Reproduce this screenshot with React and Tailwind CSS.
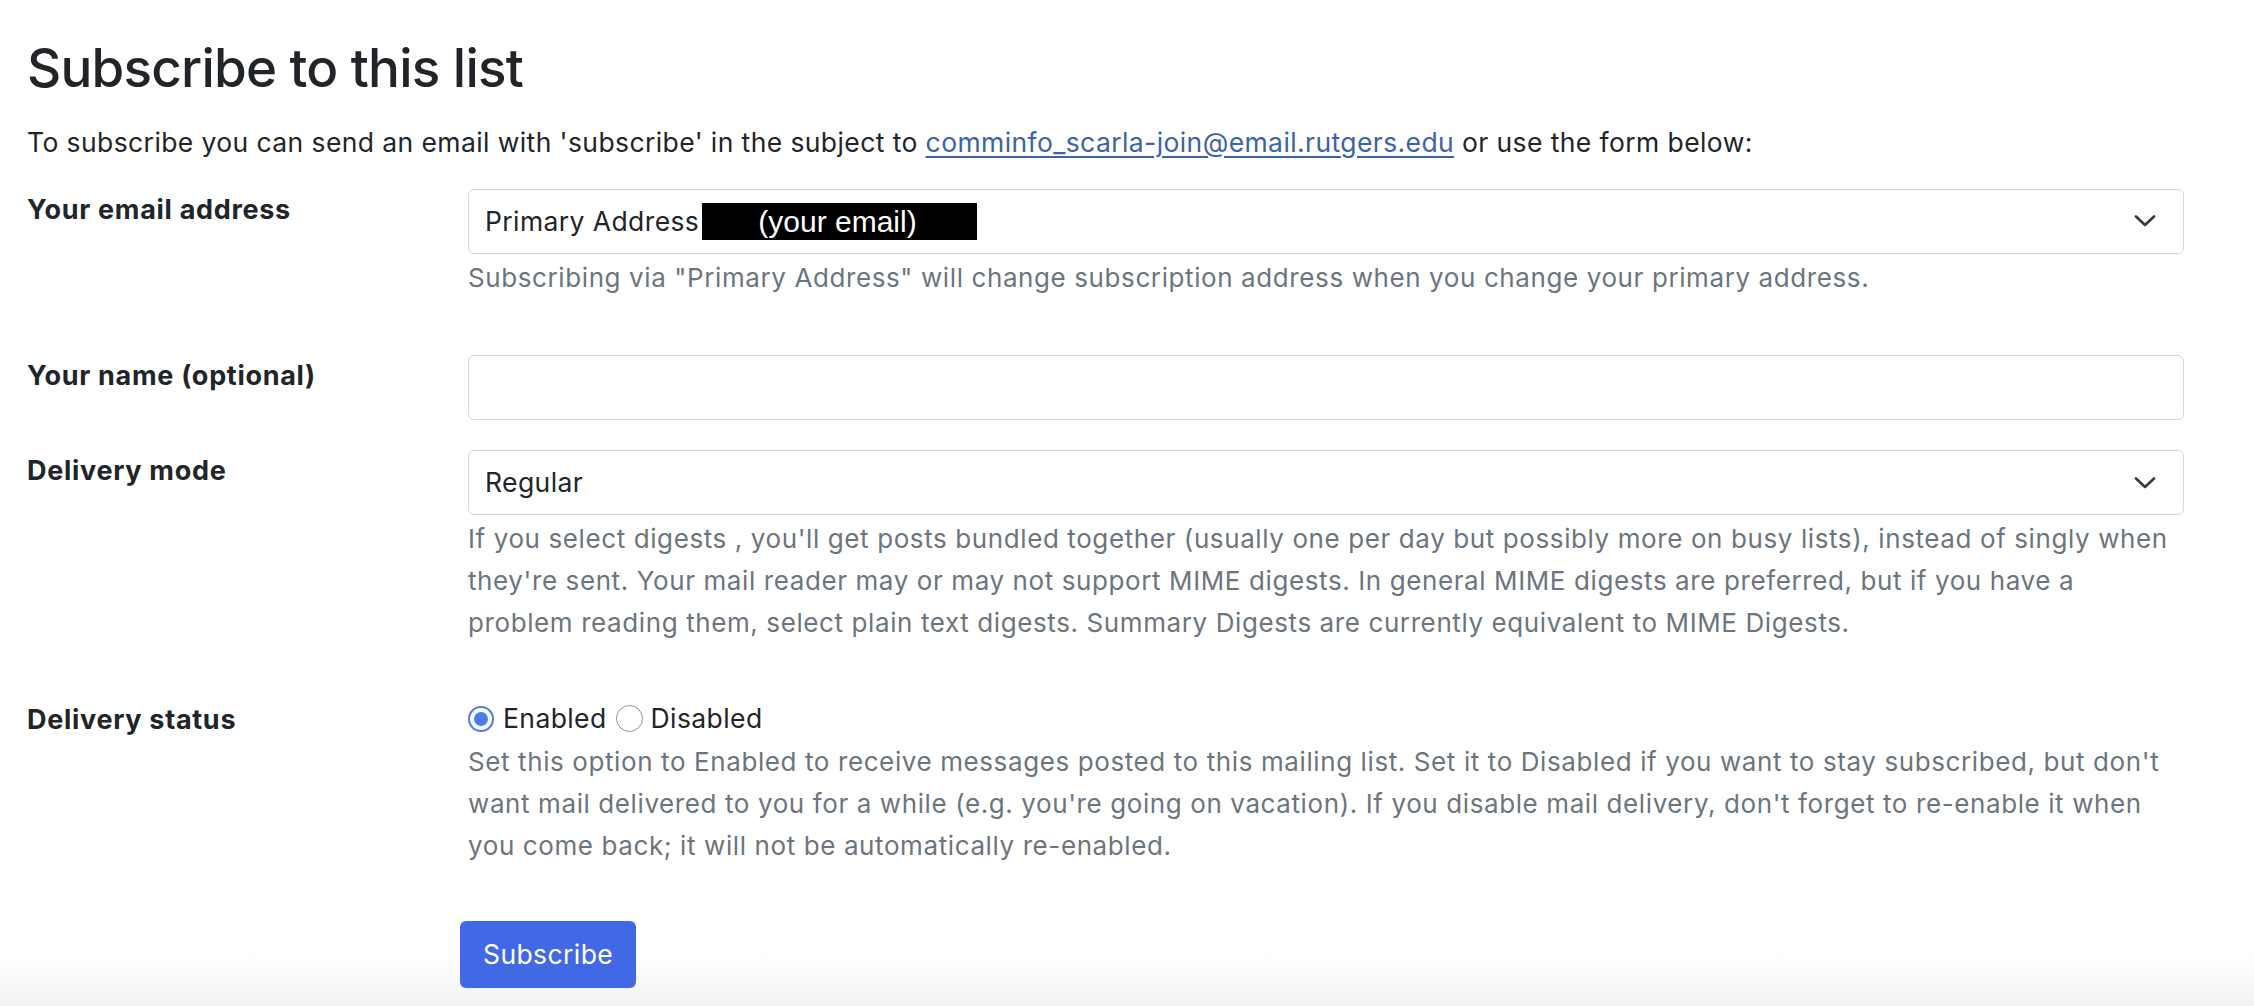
import React from "react";

function Chevron() {
  return (
    <svg width="22" height="12" viewBox="0 0 22 12" fill="none" className="shrink-0">
      <path d="M2 1.5 L11 10 L20 1.5" stroke="#343a40" strokeWidth="2.6" strokeLinecap="round" strokeLinejoin="round" />
    </svg>
  );
}

function Label({ children }) {
  return (
    <div className="pt-[1px] text-[27px] leading-[39px] font-bold tracking-[0.7px] text-[#212529]">{children}</div>
  );
}

function Help({ lines }) {
  return (
    <div className="mt-[3px] text-[26px] leading-[41.7px] tracking-[0.6px] text-[#6c757d]">
      {lines.map((l) => (
        <span key={l} className="block whitespace-nowrap">{l}</span>
      ))}
    </div>
  );
}

export default function App() {
  return (
    <div className="relative min-h-[1006px] overflow-hidden bg-white font-['Inter',sans-serif] text-[#212529]">
      <div className="pointer-events-none absolute inset-x-0 bottom-0 h-[52px] bg-gradient-to-b from-white to-[#f1f2f3]" />
      <div className="relative px-[27px] pt-[37px]">
        <h2 className="text-[53px] leading-[63.6px] font-medium tracking-[-0.8px]">Subscribe to this list</h2>
        <p className="mt-[22px] text-[26.5px] leading-[39px] tracking-[0.4px]">
          To subscribe you can send an email with 'subscribe' in the subject to{" "}
          <a href="#" className="text-[#3b63a5] underline decoration-[2px] underline-offset-[4px]">
            comminfo_scarla-join@email.rutgers.edu
          </a>{" "}
          or use the form below:
        </p>

        <form className="mt-[27px] mr-[43px] grid grid-cols-[441px_1fr]">
          {/* email address */}
          <Label>Your email address</Label>
          <div>
            <div className="flex h-[65px] items-center justify-between rounded-[6px] border-[1.5px] border-[#d3d6da] pl-[16px] pr-[27px]">
              <div className="flex items-center text-[26.5px] leading-[39px] tracking-[0.4px]">
                <span>Primary Address</span>
                <span className="ml-[3px] flex h-[37px] w-[275px] items-center bg-black pl-[56px] font-['Liberation_Sans',sans-serif] text-[30px] tracking-normal text-white">
                  (your email)
                </span>
              </div>
              <Chevron />
            </div>
            <Help
              lines={[
                'Subscribing via "Primary Address" will change subscription address when you change your primary address.',
              ]}
            />
          </div>

          {/* name */}
          <div className="mt-[57px]">
            <Label>Your name (optional)</Label>
          </div>
          <div className="mt-[57px]">
            <div className="h-[65px] rounded-[6px] border-[1.5px] border-[#d3d6da]" />
          </div>

          {/* delivery mode */}
          <div className="mt-[30px]">
            <Label>Delivery mode</Label>
          </div>
          <div className="mt-[30px]">
            <div className="flex h-[65px] items-center justify-between rounded-[6px] border-[1.5px] border-[#d3d6da] pl-[16px] pr-[27px]">
              <span className="text-[26.5px] leading-[39px] tracking-[0.4px]">Regular</span>
              <Chevron />
            </div>
            <Help
              lines={[
                "If you select digests , you'll get posts bundled together (usually one per day but possibly more on busy lists), instead of singly when",
                "they're sent. Your mail reader may or may not support MIME digests. In general MIME digests are preferred, but if you have a",
                "problem reading them, select plain text digests. Summary Digests are currently equivalent to MIME Digests.",
              ]}
            />
          </div>

          {/* delivery status */}
          <div className="mt-[56px]">
            <Label>Delivery status</Label>
          </div>
          <div className="mt-[56px]">
            <div className="flex h-[39px] items-center text-[26.5px] leading-[39px] tracking-[0.4px]">
              <span className="flex h-[26px] w-[26px] items-center justify-center rounded-full border-[2.5px] border-[#4a7cf0]">
                <span className="h-[14px] w-[14px] rounded-full bg-[#4a7cf0]" />
              </span>
              <span className="ml-[9px]">Enabled</span>
              <span className="ml-[9px] h-[27px] w-[27px] rounded-full border-[1.5px] border-[#8f8f9d]" />
              <span className="ml-[8px]">Disabled</span>
            </div>
            <Help
              lines={[
                "Set this option to Enabled to receive messages posted to this mailing list. Set it to Disabled if you want to stay subscribed, but don't",
                "want mail delivered to you for a while (e.g. you're going on vacation). If you disable mail delivery, don't forget to re-enable it when",
                "you come back; it will not be automatically re-enabled.",
              ]}
            />
          </div>

          {/* submit */}
          <div />
          <div className="mt-[54px]">
            <button
              type="button"
              className="-ml-[8px] h-[67px] rounded-[6px] bg-[#4169e6] px-[23px] text-[26.5px] leading-[39px] tracking-[0.4px] text-white"
            >
              Subscribe
            </button>
          </div>
        </form>
      </div>
    </div>
  );
}
